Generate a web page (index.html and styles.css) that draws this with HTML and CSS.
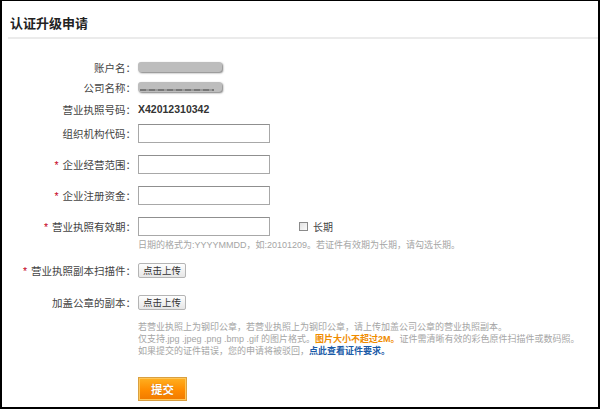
FILE: index.html
```html
<!DOCTYPE html>
<html lang="zh-CN">
<head>
<meta charset="utf-8">
<title>认证升级申请</title>
<link rel="stylesheet" href="styles.css">
</head>
<body>
<div class="page">
  <div class="header"><h1 class="title">认证升级申请</h1></div>
  <div class="form">
    <div class="row r-info r1">
      <div class="label">账户名：</div>
      <div class="field"><span class="blur"></span></div>
    </div>
    <div class="row r-info r2">
      <div class="label">公司名称：</div>
      <div class="field"><span class="blur blur2"><i></i></span></div>
    </div>
    <div class="row r-info r3">
      <div class="label">营业执照号码：</div>
      <div class="field"><span class="value">X42012310342</span></div>
    </div>
    <div class="row r-input r4">
      <div class="label">组织机构代码：</div>
      <div class="field"><input class="text" type="text"></div>
    </div>
    <div class="row r-input">
      <div class="label"><span class="star">*</span>企业经营范围：</div>
      <div class="field"><input class="text" type="text"></div>
    </div>
    <div class="row r-input">
      <div class="label"><span class="star">*</span>企业注册资金：</div>
      <div class="field"><input class="text" type="text"></div>
    </div>
    <div class="row r-input">
      <div class="label"><span class="star">*</span>营业执照有效期：</div>
      <div class="field">
        <input class="text" type="text">
        <label class="check"><span class="box"></span>长期</label>
      </div>
    </div>
    <div class="row r-hint">
      <div class="label"></div>
      <div class="field hint">日期的格式为:YYYYMMDD，如:20101209。若证件有效期为长期，请勾选长期。</div>
    </div>
    <div class="row r-btn r8">
      <div class="label"><span class="star">*</span>营业执照副本扫描件：</div>
      <div class="field"><button class="upload" type="button">点击上传</button></div>
    </div>
    <div class="row r-btn r9">
      <div class="label">加盖公章的副本：</div>
      <div class="field"><button class="upload" type="button">点击上传</button></div>
    </div>
    <div class="row r-notes">
      <div class="label"></div>
      <div class="field notes">
        <p>若营业执照上为钢印公章，若营业执照上为钢印公章，请上传加盖公司公章的营业执照副本。</p>
        <p>仅支持.jpg .jpeg .png .bmp .gif 的图片格式。<span class="warn">图片大小不超过2M。</span>证件需清晰有效的彩色原件扫描件或数码照。</p>
        <p>如果提交的证件错误，您的申请将被驳回，<a class="link" href="#">点此查看证件要求。</a></p>
      </div>
    </div>
    <div class="row r-submit">
      <div class="label"></div>
      <div class="field"><button class="submit" type="button">提交</button></div>
    </div>
  </div>
</div>
</body>
</html>
```

FILE: styles.css
```css
html, body {
  margin: 0;
  padding: 0;
  background: #fff;
}
body {
  font-family: "Liberation Sans", "Noto Sans CJK SC", sans-serif;
  color: #444;
}
.page {
  box-sizing: border-box;
  width: 600px;
  height: 409px;
  border-style: solid;
  border-color: #000;
  border-width: 1px 2px 2px 2px;
  overflow: hidden;
}
.header {
  margin-left: 6px;
  padding: 13px 0 3px 2px;
  border-bottom: 2px solid #ebebeb;
}
.title {
  margin: 0;
  font-size: 13px;
  line-height: 20px;
  font-weight: bold;
  color: #222;
}
.form {
  padding-top: 18px;
}
.row {
  display: flex;
  align-items: center;
}
.label {
  width: 134px;
  flex: none;
  box-sizing: border-box;
  text-align: right;
  font-size: 10.5px;
  color: #444;
  white-space: nowrap;
}
.star {
  color: #c4001a;
  margin-right: 4px;
}
.field {
  margin-left: 2px;
  display: flex;
  align-items: center;
}
.r-info { height: 20px; }
.r3 { height: 24px; }
.blur {
  display: block;
  width: 84px;
  height: 10px;
  border-radius: 3px;
  background: #bdbdbd;
  box-shadow: 1px 1px 2px #7a7a7a;
  position: relative;
}
.blur2 i {
  position: absolute;
  left: 2px;
  right: 8px;
  bottom: 1px;
  height: 2px;
  background: repeating-linear-gradient(90deg, #777 0 6px, #9a9a9a 6px 9px);
}
.value {
  font-weight: bold;
  font-size: 10.5px;
  color: #333;
}
.r-input { height: 19px; margin-top: 12px; }
.r4 { margin-top: 3px; }
.text {
  box-sizing: border-box;
  width: 132px;
  height: 19px;
  margin: 0;
  padding: 0 3px;
  border: 1px solid #a8a8a8;
  border-top-color: #8f8f8f;
  background: #fff;
  font-size: 11px;
}
.check {
  display: flex;
  align-items: center;
  margin-left: 29px;
  font-size: 10px;
  color: #444;
}
.box {
  box-sizing: border-box;
  width: 9px;
  height: 9px;
  margin-right: 5px;
  border: 1px solid #8a8a8a;
  background: linear-gradient(135deg, #e2e2e2, #fbfbfb);
}
.r-hint { margin-top: 3px; height: 12px; }
.hint, .notes {
  font-size: 9px;
  line-height: 12px;
  color: #a5a5a5;
  white-space: nowrap;
}
.r8 { margin-top: 12px; height: 15px; }
.r9 { margin-top: 17px; height: 15px; }
.upload {
  box-sizing: border-box;
  width: 48px;
  height: 15px;
  margin: 0;
  padding: 0;
  border: 1px solid #b4b4b4;
  border-radius: 2px;
  background: linear-gradient(#fefefe, #e6e6e6);
  font-family: inherit;
  font-size: 9.5px;
  line-height: 13px;
  color: #333;
}
.r-notes { margin-top: 11px; align-items: flex-start; }
.notes {
  display: block;
}
.notes p {
  margin: 0;
}
.warn {
  color: #f08c00;
  font-weight: bold;
}
.link {
  color: #1a5ba8;
  font-weight: bold;
  text-decoration: none;
}
.r-submit { margin-top: 20px; }
.submit {
  box-sizing: border-box;
  width: 49px;
  height: 24px;
  margin: 0;
  padding: 0;
  border: 1px solid #d9a040;
  background: linear-gradient(#ffb020, #ff8c00 55%, #f07a00);
  box-shadow: inset 0 0 0 1px #ffc658;
  font-family: inherit;
  font-size: 11.5px;
  font-weight: bold;
  color: #fff;
  text-shadow: 0 0 1px #b85a00;
}
```
